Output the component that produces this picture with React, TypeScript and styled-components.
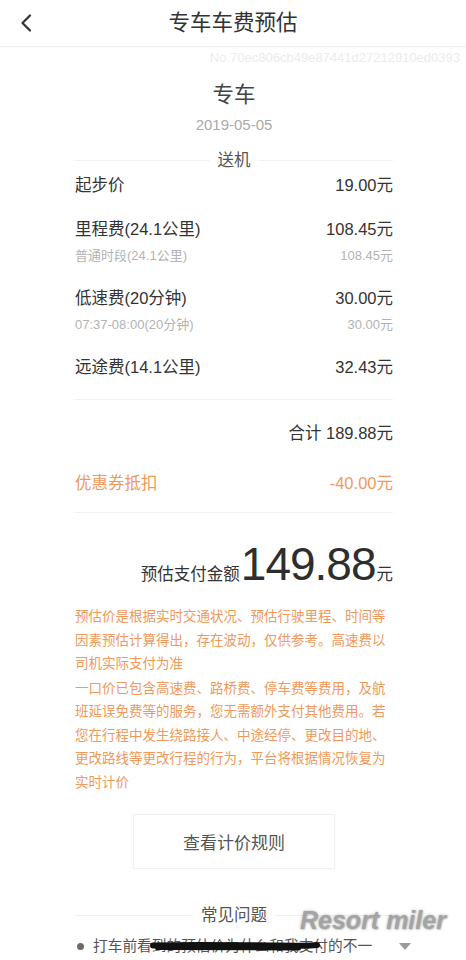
import React from "react";
import styled, { createGlobalStyle } from "styled-components";

const GlobalStyle = createGlobalStyle`
  html, body { margin: 0; padding: 0; background: #ffffff; }
  * { box-sizing: border-box; }
`;

const ORANGE = "#f0995c";
const FONT = `"Liberation Sans", "Noto Sans CJK SC", sans-serif`;

const Page = styled.div`
  width: 466px;
  min-height: 960px;
  background: #fff;
  font-family: ${FONT};
  color: #333;
  overflow: hidden;
`;

const Header = styled.header`
  height: 47px;
  display: grid;
  grid-template-columns: 56px 1fr 56px;
  align-items: center;
  border-bottom: 1px solid #efefef;
  box-shadow: 0 1px 2px rgba(0, 0, 0, 0.02);
`;

const BackButton = styled.button`
  border: 0;
  background: none;
  padding: 0 0 0 20px;
  height: 44px;
  display: flex;
  align-items: center;
  cursor: pointer;
`;

const Title = styled.h1`
  margin: 0;
  text-align: center;
  font-size: 21.5px;
  font-weight: 400;
  line-height: 44px;
  color: #333;
`;

const OrderNo = styled.div`
  margin-top: 4px;
  padding-right: 6px;
  text-align: right;
  font-size: 13px;
  line-height: 14px;
  color: #ececec;
`;

const Content = styled.main`
  padding: 0 73px 0 75px;
`;

const CarType = styled.div`
  margin-top: 16px;
  text-align: center;
  font-size: 21.5px;
  line-height: 28px;
  color: #444;
`;

const DateText = styled.div`
  margin-top: 6px;
  text-align: center;
  font-size: 15px;
  line-height: 20px;
  color: #aaa;
`;

const SectionTitle = styled.div<{ $top: number }>`
  margin-top: ${(p) => p.$top}px;
  display: flex;
  align-items: center;
  gap: 8px;
  font-size: 16.5px;
  line-height: 22px;
  color: #555;
  &::before,
  &::after {
    content: "";
    flex: 1;
    height: 1px;
    background: #f0f0f0;
  }
`;

const FeeList = styled.div`
  margin-top: 3px;
  display: flex;
  flex-direction: column;
  gap: 22px;
`;

const FeeItem = styled.div`
  display: flex;
  flex-direction: column;
  gap: 7px;
`;

const Line = styled.div<{ $color?: string }>`
  display: flex;
  justify-content: space-between;
  font-size: 16.5px;
  line-height: 22px;
  color: ${(p) => p.$color || "#333"};
`;

const SubLine = styled.div`
  display: flex;
  justify-content: space-between;
  font-size: 13px;
  line-height: 18px;
  color: #b3b3b3;
`;

const Divider = styled.div<{ $top: number }>`
  margin-top: ${(p) => p.$top}px;
  height: 1px;
  background: #f0f0f0;
`;

const TotalLine = styled.div`
  margin-top: 22px;
  text-align: right;
  font-size: 16.5px;
  line-height: 22px;
  color: #333;
`;

const CouponLine = styled(Line)`
  margin-top: 28px;
`;

const PayRow = styled.div`
  margin-top: 28px;
  display: flex;
  justify-content: flex-end;
  align-items: baseline;
  color: #333;
`;

const PayLabel = styled.span`
  font-size: 16.5px;
  color: #333;
`;

const PayAmount = styled.span`
  font-size: 46px;
  line-height: 46px;
  letter-spacing: -1px;
  color: #2e2e2e;
  margin: 0 1px 0 1px;
`;

const PayUnit = styled.span`
  font-size: 16.5px;
`;

const Notice = styled.p<{ $top: number }>`
  margin: ${(p) => p.$top}px 0 0 0;
  font-size: 13.5px;
  line-height: 23.5px;
  color: ${ORANGE};
  font-family: "Noto Sans CJK SC", ${FONT};
`;

const RuleButton = styled.button`
  display: block;
  margin: 21px auto 0;
  width: 202px;
  height: 55px;
  border: 1px solid #f0f0f0;
  background: #fff;
  box-shadow: 0 0 3px rgba(0, 0, 0, 0.03);
  font-family: ${FONT};
  font-size: 17px;
  color: #555;
  cursor: pointer;
`;

const FaqSection = styled.section`
  position: relative;
  margin-top: 35px;
`;

const FaqItem = styled.div`
  position: relative;
  margin-top: 10px;
  margin-right: -18px;
  display: flex;
  align-items: center;
  gap: 9px;
  font-size: 14.7px;
  line-height: 20px;
  color: #555;
`;

const Dot = styled.span`
  margin-left: 2px;
  width: 7px;
  height: 7px;
  border-radius: 50%;
  background: #6a6a6a;
  flex: none;
`;

const FaqText = styled.span`
  flex: 1;
`;

const Caret = styled.span`
  width: 0;
  height: 0;
  border-left: 6px solid transparent;
  border-right: 6px solid transparent;
  border-top: 7px solid #9a9a9a;
`;

const Scribble = styled.svg`
  position: absolute;
  left: 74px;
  top: 3px;
  width: 172px;
  height: 14px;
  pointer-events: none;
`;

const Watermark = styled.div`
  position: absolute;
  left: 225px;
  top: 1px;
  font-family: "Liberation Sans", sans-serif;
  font-style: italic;
  font-weight: 700;
  font-size: 25px;
  line-height: 30px;
  color: #959595;
  text-shadow: 0 0 3px rgba(60, 60, 60, 0.45), 1px 1px 1px rgba(0, 0, 0, 0.12);
  opacity: 0.85;
  white-space: nowrap;
  pointer-events: none;
`;

const fees = [
  { label: "起步价", value: "19.00元" },
  { label: "里程费(24.1公里)", value: "108.45元", sub: ["普通时段(24.1公里)", "108.45元"] },
  { label: "低速费(20分钟)", value: "30.00元", sub: ["07:37-08:00(20分钟)", "30.00元"] },
  { label: "远途费(14.1公里)", value: "32.43元" },
];

export default function App() {
  return (
    <Page>
      <GlobalStyle />
      <Header>
        <BackButton aria-label="返回">
          <svg width="12" height="18" viewBox="0 0 12 18">
            <path d="M10 1.5 L2.5 9 L10 16.5" fill="none" stroke="#333" strokeWidth="2.2" strokeLinecap="round" strokeLinejoin="round" />
          </svg>
        </BackButton>
        <Title>专车车费预估</Title>
        <span />
      </Header>
      <OrderNo>No.70ec806cb49e87441d27212910ed0393</OrderNo>
      <Content>
        <CarType>专车</CarType>
        <DateText>2019-05-05</DateText>
        <SectionTitle $top={14}>送机</SectionTitle>
        <FeeList>
          {fees.map((f) => (
            <FeeItem key={f.label}>
              <Line>
                <span>{f.label}</span>
                <span>{f.value}</span>
              </Line>
              {f.sub && (
                <SubLine>
                  <span>{f.sub[0]}</span>
                  <span>{f.sub[1]}</span>
                </SubLine>
              )}
            </FeeItem>
          ))}
        </FeeList>
        <Divider $top={21} />
        <TotalLine>合计 189.88元</TotalLine>
        <CouponLine $color={ORANGE}>
          <span>优惠券抵扣</span>
          <span>-40.00元</span>
        </CouponLine>
        <Divider $top={18} />
        <PayRow>
          <PayLabel>预估支付金额</PayLabel>
          <PayAmount>149.88</PayAmount>
          <PayUnit>元</PayUnit>
        </PayRow>
        <Notice $top={17}>
          预估价是根据实时交通状况、预估行驶里程、时间等因素预估计算得出，存在波动，仅供参考。高速费以司机实际支付为准
        </Notice>
        <Notice $top={1}>
          一口价已包含高速费、路桥费、停车费等费用，及航班延误免费等的服务，您无需额外支付其他费用。若您在行程中发生绕路接人、中途经停、更改目的地、更改路线等更改行程的行为，平台将根据情况恢复为实时计价
        </Notice>
        <RuleButton>查看计价规则</RuleButton>
        <FaqSection>
          <SectionTitle $top={0}>常见问题</SectionTitle>
          <FaqItem>
            <Dot />
            <FaqText>打车前看到的预估价为什么和我支付的不一</FaqText>
            <Caret />
            <Scribble viewBox="0 0 172 14">
              <path d="M4 6.5 C 40 5.5, 80 6, 120 6.5 S 155 7, 168 6" fill="none" stroke="#111" strokeWidth="6" strokeLinecap="round" />
              <path d="M8 9 C 50 9.5, 100 9, 150 9.5" fill="none" stroke="#111" strokeWidth="4" strokeLinecap="round" />
            </Scribble>
          </FaqItem>
          <Watermark>Resort miler</Watermark>
        </FaqSection>
      </Content>
    </Page>
  );
}
